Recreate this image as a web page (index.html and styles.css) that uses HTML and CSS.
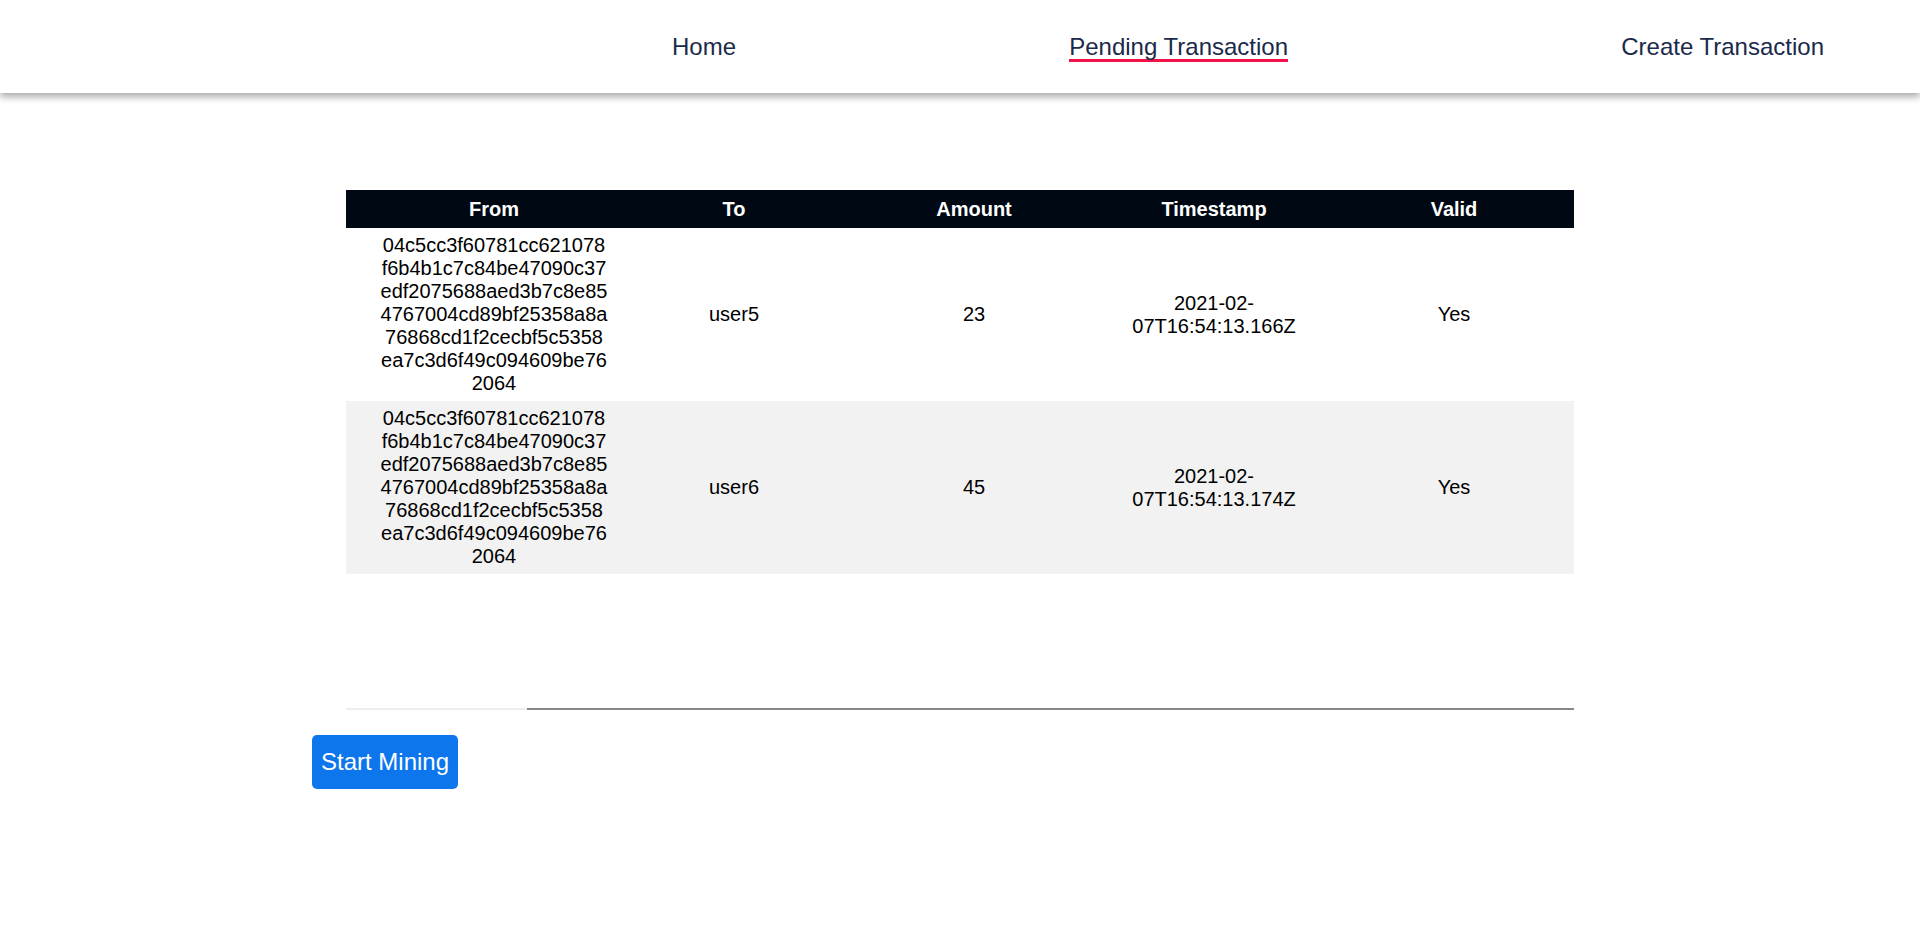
FILE: index.html
```html
<!DOCTYPE html>
<html lang="en">
<head>
<meta charset="utf-8">
<title>Pending Transaction</title>
<link rel="stylesheet" href="styles.css">
</head>
<body>
<nav class="navbar">
  <ul class="nav-links">
    <li><a class="nav-link" href="#">Home</a></li>
    <li><a class="nav-link active" href="#">Pending Transaction</a></li>
    <li><a class="nav-link" href="#">Create Transaction</a></li>
  </ul>
</nav>
<main class="main">
  <table class="tx-table">
    <colgroup>
      <col class="col-from">
      <col class="col-std">
      <col class="col-std">
      <col class="col-std">
      <col class="col-std">
    </colgroup>
    <thead>
      <tr>
        <th class="cell-from">From</th>
        <th>To</th>
        <th>Amount</th>
        <th>Timestamp</th>
        <th>Valid</th>
      </tr>
    </thead>
    <tbody>
      <tr>
        <td class="cell-from"><div class="hash">04c5cc3f60781cc621078f6b4b1c7c84be47090c37edf2075688aed3b7c8e854767004cd89bf25358a8a76868cd1f2cecbf5c5358ea7c3d6f49c094609be762064</div></td>
        <td>user5</td>
        <td>23</td>
        <td><div class="stamp">2021-02-07T16:54:13.166Z</div></td>
        <td>Yes</td>
      </tr>
      <tr class="alt">
        <td class="cell-from"><div class="hash">04c5cc3f60781cc621078f6b4b1c7c84be47090c37edf2075688aed3b7c8e854767004cd89bf25358a8a76868cd1f2cecbf5c5358ea7c3d6f49c094609be762064</div></td>
        <td>user6</td>
        <td>45</td>
        <td><div class="stamp">2021-02-07T16:54:13.174Z</div></td>
        <td>Yes</td>
      </tr>
    </tbody>
  </table>
  <div class="divider">
    <div class="divider-light"></div>
    <div class="divider-dark"></div>
  </div>
  <div class="actions">
    <button class="btn-mine" type="button">Start Mining</button>
  </div>
</main>
</body>
</html>
```
FILE: styles.css
```css
* {
  box-sizing: border-box;
}

html, body {
  margin: 0;
  padding: 0;
  background: #ffffff;
  font-family: "Liberation Sans", Arial, sans-serif;
  color: #000000;
}

.navbar {
  height: 93px;
  padding-top: 3px;
  background: #ffffff;
  box-shadow: 0 4px 7px rgba(0, 0, 0, 0.33);
  display: flex;
  align-items: center;
  position: relative;
  z-index: 1;
}

.nav-links {
  list-style: none;
  margin: 0 0 0 672px;
  padding: 0;
  width: 1152px;
  display: flex;
  justify-content: space-between;
  align-items: center;
}

.nav-link {
  display: inline-block;
  font-size: 24px;
  line-height: 25px;
  color: #1b2a4b;
  text-decoration: none;
  border-bottom: 3px solid transparent;
}

.nav-link.active {
  border-bottom-color: #f01248;
}

.main {
  padding-top: 97px;
}

.tx-table {
  width: 1228px;
  margin: 0 auto;
  border-collapse: collapse;
  table-layout: fixed;
  font-size: 20px;
  line-height: 23px;
}

.col-from {
  width: 268px;
}

.col-std {
  width: 240px;
}

.tx-table th {
  background: #000814;
  color: #ffffff;
  font-weight: bold;
  height: 38px;
  padding: 0;
  text-align: center;
  vertical-align: middle;
}

.tx-table td {
  padding: 6px 0;
  text-align: center;
  vertical-align: middle;
}

.tx-table th.cell-from,
.tx-table td.cell-from {
  padding-left: 34px;
  padding-right: 6px;
}

.hash {
  width: 227.5px;
  margin: 0 auto;
  word-break: break-all;
}

.stamp {
  width: 200px;
  margin: 0 auto;
  word-break: normal;
}

.tx-table tr.alt td {
  background: #f2f2f2;
}

.divider {
  width: 1228px;
  height: 2px;
  margin: 134px auto 0;
  display: flex;
}

.divider-light {
  width: 181px;
  background: #eeeeee;
}

.divider-dark {
  flex: 1;
  background: #888888;
}

.actions {
  width: 1296px;
  margin: 25px auto 0;
}

.btn-mine {
  height: 54px;
  padding: 0 9px;
  background: #0d76ed;
  color: #ffffff;
  border: none;
  border-radius: 5px;
  font-family: "Liberation Sans", Arial, sans-serif;
  font-size: 24px;
  cursor: pointer;
}
```
